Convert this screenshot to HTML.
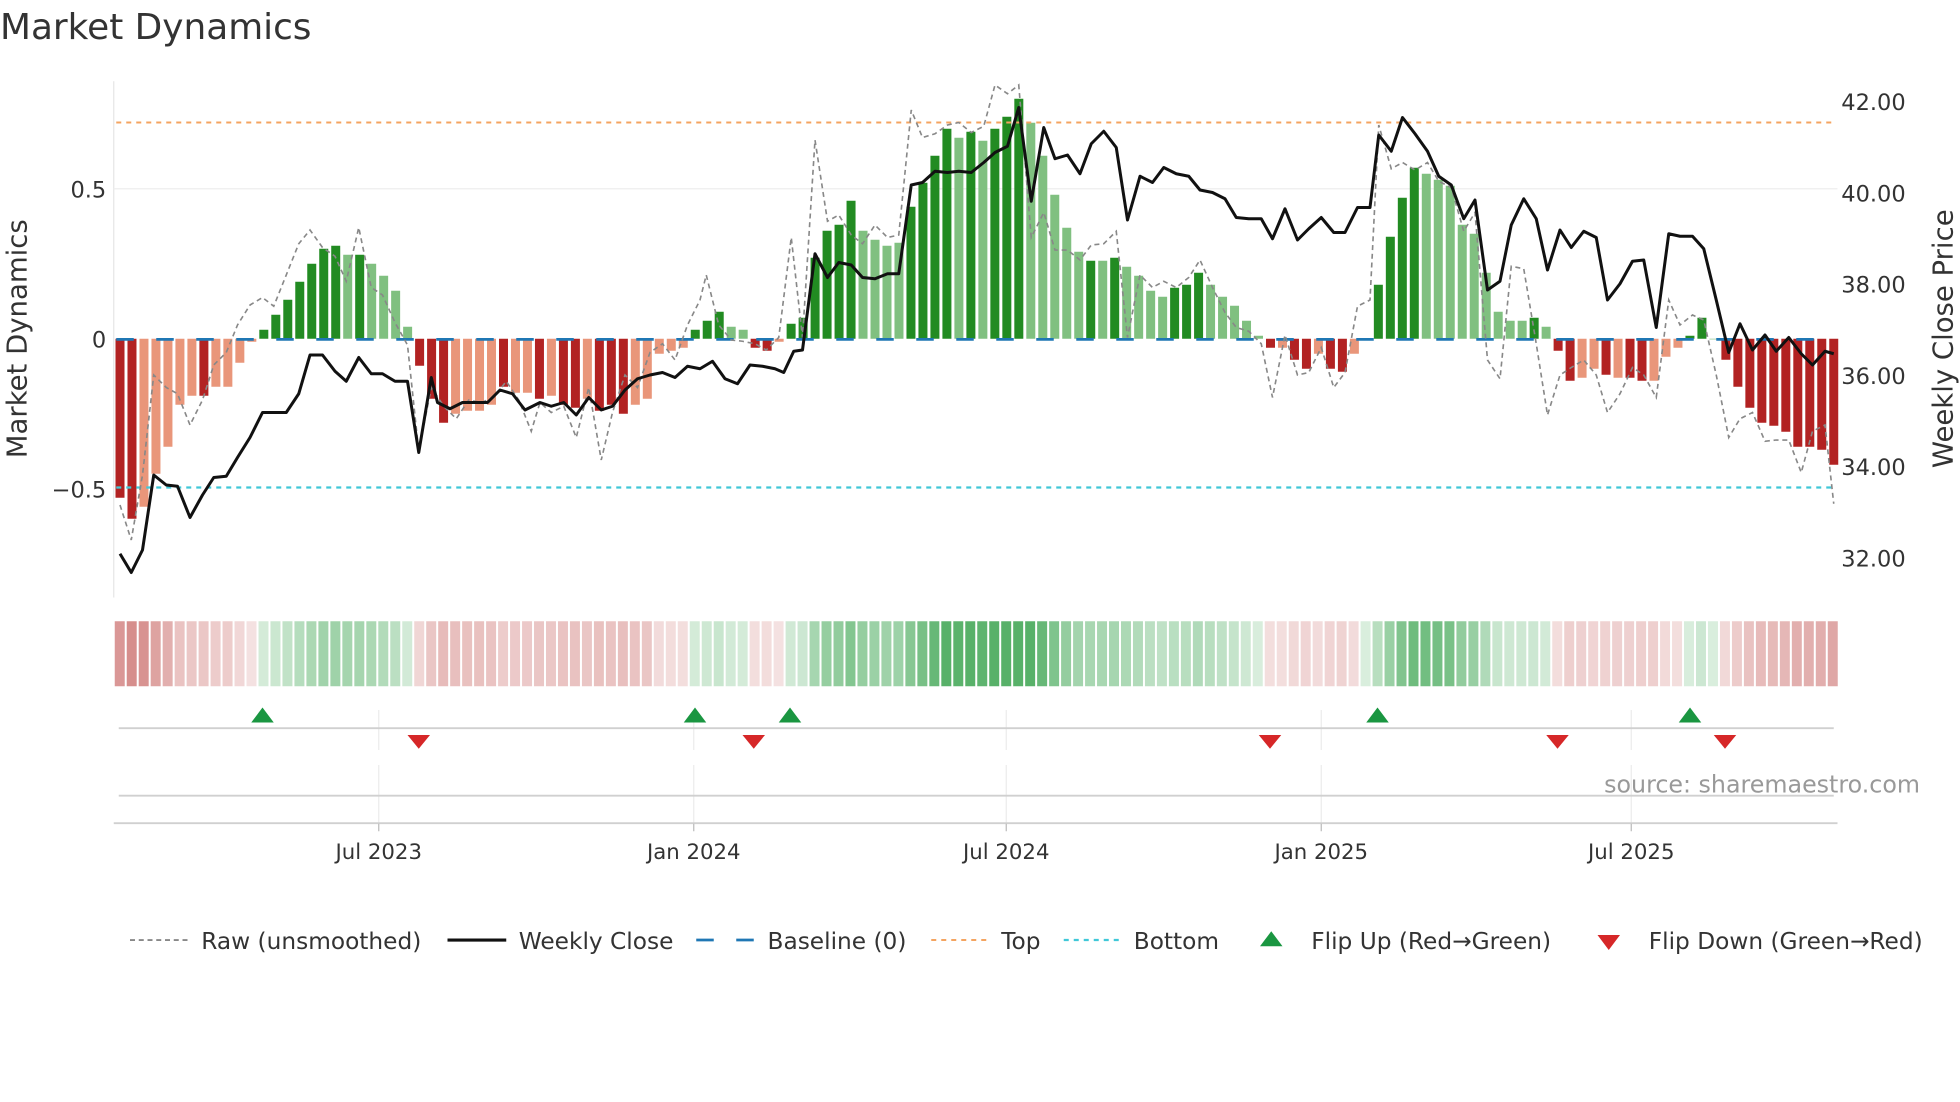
<!DOCTYPE html>
<html><head><meta charset="utf-8"><style>
html,body{margin:0;padding:0;background:#fff;width:1960px;height:1102px;overflow:hidden}
svg{display:block}
text{font-family:"DejaVu Sans","Liberation Sans",sans-serif;fill:#333}
</style></head><body>
<svg id="s" width="1960" height="1102" viewBox="0 0 1568 881.6" xmlns="http://www.w3.org/2000/svg">
<rect width="1568" height="882" fill="#fff"/>
<text x="0" y="31" font-size="28.7">Market Dynamics</text>
<line x1="91" y1="65" x2="91" y2="478" stroke="#e6e6e6"/>
<line x1="91" y1="151" x2="1470" y2="151" stroke="#eeeeee"/>
<text x="85" y="158" font-size="18" text-anchor="end">0.5</text>
<text x="85" y="278" font-size="18" text-anchor="end">0</text>
<text x="85" y="398" font-size="18" text-anchor="end">−0.5</text>
<text transform="translate(21,271) rotate(-90)" font-size="22" text-anchor="middle">Market Dynamics</text>
<text x="1473" y="88" font-size="18">42.00</text>
<text x="1473" y="161" font-size="18">40.00</text>
<text x="1473" y="234" font-size="18">38.00</text>
<text x="1473" y="307" font-size="18">36.00</text>
<text x="1473" y="380" font-size="18">34.00</text>
<text x="1473" y="453" font-size="18">32.00</text>
<text transform="translate(1562,271) rotate(-90)" font-size="22" text-anchor="middle">Weekly Close Price</text>
<g id="bars"></g>
<line x1="93" y1="98" x2="1466" y2="98" stroke="#f4a460" stroke-width="1.6" stroke-dasharray="4,4"/>
<line x1="93" y1="390" x2="1466" y2="390" stroke="#40c8d8" stroke-width="1.8" stroke-dasharray="4,4"/>
<line x1="93" y1="271.5" x2="1466" y2="271.5" stroke="#1f77b4" stroke-width="2.2" stroke-dasharray="14,18"/>
<polyline id="raw" fill="none" stroke="#888" stroke-width="1.3" stroke-dasharray="4,3"/>
<polyline id="price" fill="none" stroke="#111" stroke-width="2.4" stroke-linejoin="round"/>
<g id="heat"></g>
<g stroke="#ececec">
<line x1="303" y1="568" x2="303" y2="600"/><line x1="555" y1="568" x2="555" y2="600"/><line x1="805" y1="568" x2="805" y2="600"/><line x1="1057" y1="568" x2="1057" y2="600"/><line x1="1305" y1="568" x2="1305" y2="600"/>
<line x1="303" y1="612" x2="303" y2="658"/><line x1="555" y1="612" x2="555" y2="658"/><line x1="805" y1="612" x2="805" y2="658"/><line x1="1057" y1="612" x2="1057" y2="658"/><line x1="1305" y1="612" x2="1305" y2="658"/>
</g>
<line x1="95" y1="582.5" x2="1467" y2="582.5" stroke="#d0d0d0" stroke-width="1.5"/>
<line x1="95" y1="636.5" x2="1467" y2="636.5" stroke="#d0d0d0" stroke-width="1.5"/>
<line x1="91" y1="658.5" x2="1470" y2="658.5" stroke="#d0d0d0" stroke-width="1.5"/>
<g stroke="#bbb"><line x1="303" y1="659" x2="303" y2="665"/><line x1="555" y1="659" x2="555" y2="665"/><line x1="805" y1="659" x2="805" y2="665"/><line x1="1057" y1="659" x2="1057" y2="665"/><line x1="1305" y1="659" x2="1305" y2="665"/></g>
<g id="flips"></g>
<text x="1536" y="634" font-size="19" style="fill:#999" text-anchor="end">source: sharemaestro.com</text>
<g font-size="17">
<text x="303" y="687" text-anchor="middle">Jul 2023</text>
<text x="555" y="687" text-anchor="middle">Jan 2024</text>
<text x="805" y="687" text-anchor="middle">Jul 2024</text>
<text x="1057" y="687" text-anchor="middle">Jan 2025</text>
<text x="1305" y="687" text-anchor="middle">Jul 2025</text>
</g>
<g font-size="18.6">
<line x1="104" y1="752" x2="150" y2="752" stroke="#888" stroke-width="1.5" stroke-dasharray="4,3"/>
<text x="161" y="759">Raw (unsmoothed)</text>
<line x1="358" y1="752" x2="405" y2="752" stroke="#111" stroke-width="2.5"/>
<text x="415" y="759">Weekly Close</text>
<line x1="557" y1="752" x2="571" y2="752" stroke="#1f77b4" stroke-width="2.2"/>
<line x1="589" y1="752" x2="603" y2="752" stroke="#1f77b4" stroke-width="2.2"/>
<text x="614" y="759">Baseline (0)</text>
<line x1="745" y1="752" x2="791" y2="752" stroke="#f4a460" stroke-width="1.6" stroke-dasharray="4,4"/>
<text x="801" y="759">Top</text>
<line x1="851" y1="752" x2="897" y2="752" stroke="#40c8d8" stroke-width="1.8" stroke-dasharray="4,4"/>
<text x="907" y="759">Bottom</text>
<polygon points="1008,757 1026,757 1017,745" fill="#1a9641"/>
<text x="1049" y="759">Flip Up (Red→Green)</text>
<polygon points="1278,748 1296,748 1287,760" fill="#d62728"/>
<text x="1319" y="759">Flip Down (Green→Red)</text>
</g>
</svg>
<script>
var NS="http://www.w3.org/2000/svg";
var D="#b22222",S="#e9967a",G="#228b22",L="#80c080";
var v=[[-0.53,D],[-0.6,D],[-0.56,S],[-0.45,S],[-0.36,S],[-0.22,S],[-0.19,S],[-0.19,D],[-0.16,S],[-0.16,S],[-0.08,S],[-0.01,S],
[0.03,G],[0.08,G],[0.13,G],[0.19,G],[0.25,G],[0.3,G],[0.31,G],[0.28,L],[0.28,G],[0.25,L],[0.21,L],[0.16,L],[0.04,L],
[-0.09,D],[-0.2,D],[-0.28,D],[-0.25,S],[-0.24,S],[-0.24,S],[-0.22,S],[-0.16,D],[-0.18,S],[-0.18,S],[-0.2,D],[-0.19,S],[-0.22,D],[-0.23,D],[-0.2,S],[-0.24,D],[-0.22,D],[-0.25,D],[-0.22,S],[-0.2,S],[-0.05,S],[-0.04,S],[-0.03,S],
[0.03,G],[0.06,G],[0.09,G],[0.04,L],[0.03,L],[-0.03,D],[-0.04,D],[-0.01,S],[0.05,G],[0.07,G],[0.27,G],[0.36,G],[0.38,G],[0.46,G],[0.36,L],[0.33,L],[0.31,L],[0.32,L],[0.44,G],[0.52,G],[0.61,G],[0.7,G],[0.67,L],[0.69,G],[0.66,L],[0.7,G],[0.74,G],[0.8,G],[0.72,L],[0.61,L],[0.48,L],[0.37,L],[0.29,L],[0.26,G],[0.26,L],[0.27,G],[0.24,L],[0.21,L],[0.16,L],[0.14,L],[0.17,G],[0.18,G],[0.22,G],[0.18,L],[0.14,L],[0.11,L],[0.06,L],[0.01,L],
[-0.03,D],[-0.03,S],[-0.07,D],[-0.1,D],[-0.05,S],[-0.1,D],[-0.11,D],[-0.05,S],[0.0,L],[0.18,G],[0.34,G],[0.47,G],[0.57,G],[0.55,L],[0.53,L],[0.51,L],[0.38,L],[0.35,L],[0.22,L],[0.09,L],[0.06,L],[0.06,L],[0.07,G],[0.04,L],
[-0.04,D],[-0.14,D],[-0.13,S],[-0.1,S],[-0.12,D],[-0.13,S],[-0.13,D],[-0.14,D],[-0.14,S],[-0.06,S],[-0.03,S],[0.01,G],[0.07,G],[0.0,L],[-0.07,D],[-0.16,D],[-0.23,D],[-0.28,D],[-0.29,D],[-0.31,D],[-0.36,D],[-0.36,D],[-0.37,D],[-0.42,D]];
var n=v.length,x0=96,x1=1467,dx=(x1-x0)/(n-1);
var bars=document.getElementById("bars"),heat=document.getElementById("heat");
var hx0=91,hw=(1471-91)/n;
for(var i=0;i<n;i++){var val=v[i][0],x=x0+i*dx;var r=document.createElementNS(NS,"rect");
var y=val>0?271-val*240:271,h=Math.max(Math.abs(val)*240,0.5);
r.setAttribute("x",x-3.6);r.setAttribute("width",7.2);r.setAttribute("y",y);r.setAttribute("height",h);r.setAttribute("fill",v[i][1]);bars.appendChild(r);
var c=document.createElementNS(NS,"rect");var g=(v[i][1]==G||v[i][1]==L);
var a=Math.min(0.85,0.18+Math.abs(val)*0.9);
c.setAttribute("x",hx0+i*hw+0.8);c.setAttribute("width",hw-1.6);c.setAttribute("y",497);c.setAttribute("height",52);
c.setAttribute("fill",g?"#2e9e44":"#c0504d");c.setAttribute("fill-opacity",g?Math.min(0.8,a):Math.min(0.65,a*0.9));heat.appendChild(c);}
var price=[96,443,105,458,114,440,123,380,133,388,142,389,152,414,162,396,171,382,181,381,190,366,200,350,210,330,219,330,229,330,239,315,248,284,258,284,268,297,277,305,287,286,297,299,306,299,316,305,326,305,335,362,345,302,350,322,360,327,370,322,380,322,390,322,400,312,410,315,420,328,432,322,441,325,451,322,461,332,471,318,481,328,490,325,500,312,510,303,520,300,530,298,540,302,550,293,560,295,570,289,580,303,590,307,600,292,610,293,620,295,627,298,635,281,642,280,652,203,662,222,671,210,681,212,690,222,700,223,710,219,719,219,729,148,738,146,748,137,758,138,767,137,777,138,787,130,796,122,806,117,815,86,825,161,835,102,844,127,854,124,864,139,873,115,883,105,893,118,902,176,912,141,922,146,931,134,941,139,951,141,960,152,970,154,980,159,989,174,999,175,1009,175,1018,191,1028,167,1038,192,1047,183,1057,174,1067,186,1076,186,1086,166,1096,166,1103,108,1113,121,1122,94,1132,107,1142,121,1151,141,1161,148,1171,175,1180,160,1190,232,1200,225,1209,180,1219,159,1229,175,1238,216,1248,184,1257,198,1267,185,1277,190,1286,240,1296,227,1306,209,1315,208,1325,262,1335,187,1344,189,1354,189,1363,199,1373,240,1383,282,1392,259,1402,280,1412,268,1421,281,1431,270,1441,283,1450,292,1460,281,1467,283];
var raw=[96,404,105,432,114,380,123,300,133,310,142,315,152,340,162,320,171,292,181,282,190,260,200,244,210,238,219,245,229,220,239,195,248,184,258,198,268,205,277,225,287,182,297,230,306,236,316,258,326,276,335,361,345,310,355,325,365,335,375,320,385,322,395,318,405,305,415,320,425,345,432,322,441,330,451,325,461,350,471,310,481,368,490,330,500,300,510,310,520,282,530,275,540,288,550,260,560,240,565,220,575,260,585,272,594,273,604,275,613,280,623,270,633,190,642,270,652,112,662,177,671,172,681,188,690,195,700,180,710,190,719,188,729,88,738,110,748,107,758,100,767,98,777,106,787,101,796,68,806,75,815,68,825,190,835,170,844,200,854,200,864,208,873,196,883,195,893,185,902,270,912,220,922,230,931,225,941,230,951,222,960,208,970,230,980,250,989,262,999,265,1009,275,1018,318,1028,268,1038,300,1047,298,1057,278,1067,310,1076,298,1086,245,1096,240,1103,100,1113,135,1122,130,1132,136,1142,130,1151,145,1161,150,1171,185,1180,170,1190,288,1200,303,1209,213,1219,215,1229,275,1238,332,1248,300,1257,294,1267,288,1277,300,1286,330,1296,315,1306,294,1315,300,1325,318,1335,240,1344,260,1354,252,1363,256,1373,300,1383,350,1392,335,1402,330,1412,353,1421,352,1431,352,1441,378,1450,345,1460,340,1467,403];
function pts(a){var s="";for(var i=0;i<a.length;i+=2)s+=a[i]+","+a[i+1]+" ";return s;}
document.getElementById("price").setAttribute("points",pts(price));
document.getElementById("raw").setAttribute("points",pts(raw));
var fl=document.getElementById("flips");
[210,556,632,1102,1352].forEach(function(x){var p=document.createElementNS(NS,"polygon");p.setAttribute("points",(x-9)+",578 "+(x+9)+",578 "+x+",566");p.setAttribute("fill","#1a9641");fl.appendChild(p);});
[335,603,1016,1246,1380].forEach(function(x){var p=document.createElementNS(NS,"polygon");p.setAttribute("points",(x-9)+",588 "+(x+9)+",588 "+x+",599");p.setAttribute("fill","#d62728");fl.appendChild(p);});
</script>
</body></html>
